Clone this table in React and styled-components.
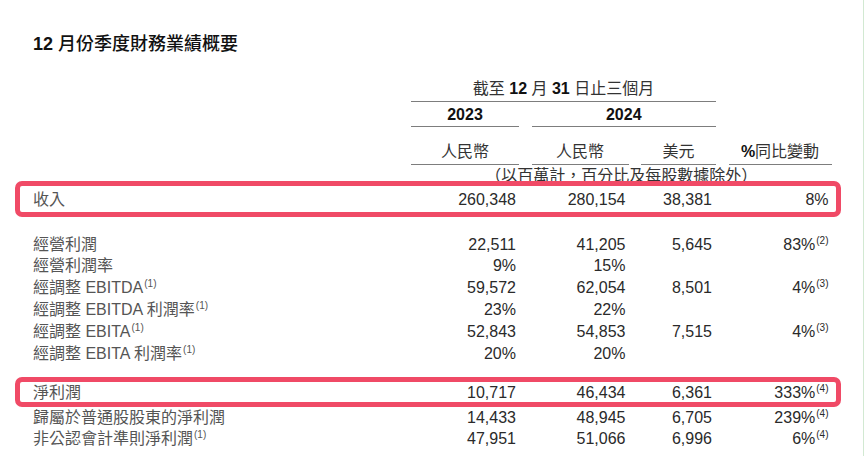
import React from "react";
import styled, { createGlobalStyle } from "styled-components";

const GlobalStyle = createGlobalStyle`
  html, body {
    margin: 0;
    padding: 0;
    background: #fff;
  }
  body {
    font-family: "Liberation Sans", "Noto Sans CJK TC", Arial, sans-serif;
    font-size: 16px;
    color: #2b2b2b;
  }
`;

const rowsTop = [
  { label: "經營利潤", c1: "22,511", c2: "41,205", c3: "5,645", c4: "83%", n: "(2)" },
  { label: "經營利潤率", c1: "9%", c2: "15%" },
  { label: "經調整 EBITDA", ls: "(1)", c1: "59,572", c2: "62,054", c3: "8,501", c4: "4%", n: "(3)" },
  { label: "經調整 EBITDA 利潤率", ls: "(1)", c1: "23%", c2: "22%" },
  { label: "經調整 EBITA", ls: "(1)", c1: "52,843", c2: "54,853", c3: "7,515", c4: "4%", n: "(3)" },
  { label: "經調整 EBITA 利潤率", ls: "(1)", c1: "20%", c2: "20%" },
];

const revenue = { label: "收入", c1: "260,348", c2: "280,154", c3: "38,381", c4: "8%" };
const netProfit = { label: "淨利潤", c1: "10,717", c2: "46,434", c3: "6,361", c4: "333%", n: "(4)" };

const rowsBottom = [
  { label: "歸屬於普通股股東的淨利潤", c1: "14,433", c2: "48,945", c3: "6,705", c4: "239%", n: "(4)" },
  { label: "非公認會計準則淨利潤", ls: "(1)", c1: "47,951", c2: "51,066", c3: "6,996", c4: "6%", n: "(4)" },
];

const DataRow = ({ row }) => (
  <Row>
    <Label>
      {row.label}
      {row.ls && <Sup>{row.ls}</Sup>}
    </Label>
    <Num>{row.c1}</Num>
    <Num>{row.c2}</Num>
    <Num $pr={4}>{row.c3}</Num>
    <Num>
      {row.c4}
      {row.n && <Sup>{row.n}</Sup>}
    </Num>
  </Row>
);

const App = () => {
  return (
    <Page>
      <GlobalStyle />
      <Title>
        <b>12</b> 月份季度財務業績概要
      </Title>

      <Section>
        <Head>
          <HeadCell $span="2 / 5" $pt={0} $pb={2}>
            截至 <b>12</b> 月 <b>31</b> 日止三個月
          </HeadCell>
        </Head>
        <Head>
          <HeadCell $span="2 / 3" $pt={3} $pb={1}>
            <b>2023</b>
          </HeadCell>
          <HeadCell $span="3 / 5" $pt={3} $pb={1}>
            <b>2024</b>
          </HeadCell>
        </Head>
        <Head>
          <HeadCell $span="2 / 3" $pt={14.5} $pb={2.5}>人民幣</HeadCell>
          <HeadCell $span="3 / 4" $pt={14.5} $pb={2.5}>人民幣</HeadCell>
          <HeadCell $span="4 / 5" $pt={14.5} $pb={2.5}>美元</HeadCell>
          <HeadCell $span="5 / 6" $pt={14.5} $pb={2.5}>
            <b>%</b>同比變動
          </HeadCell>
        </Head>
        <Head>
          <Note>（以百萬計，百分比及每股數據除外）</Note>
        </Head>
      </Section>

      <Highlight $pt={3} $pb={1} $lh={22}>
        <DataRow row={revenue} />
      </Highlight>

      <Section $mt={16.5} $lh={21.9}>
        {rowsTop.map((r) => (
          <DataRow key={r.label} row={r} />
        ))}
      </Section>

      <Highlight $mt={12} $pt={1} $pb={0} $lh={19}>
        <DataRow row={netProfit} />
      </Highlight>

      <Section $lh={21}>
        {rowsBottom.map((r) => (
          <DataRow key={r.label} row={r} />
        ))}
      </Section>
    </Page>
  );
};

export default App;

/* Styled Components */
const COLS = "365.5px 108px 97px 75px 103px";

const Page = styled.div`
  width: 864px;
  min-height: 100vh;
  box-sizing: border-box;
  padding: 32px 0 0 15px;
  border-right: 1px solid #d2e9d2;
`;

const Title = styled.h1`
  margin: 0 0 23px 18px;
  font-size: 18px;
  line-height: 24px;
  font-weight: 500;
  color: #111;
  font-family: "Liberation Sans", "Noto Sans CJK TC", sans-serif;

  b {
    font-weight: 700;
  }
`;

const Section = styled.div`
  padding-left: 18px;
  margin-top: ${(p) => p.$mt || 0}px;
  line-height: ${(p) => p.$lh || 20}px;
`;

const Head = styled.div`
  display: grid;
  grid-template-columns: ${COLS};
  column-gap: 12.5px;
  line-height: 20px;
  color: #333;
`;

const HeadCell = styled.div`
  grid-column: ${(p) => p.$span};
  text-align: center;
  padding: ${(p) => p.$pt}px 0 ${(p) => p.$pb}px;
  border-bottom: 1px solid #7d7d7d;
  white-space: nowrap;

  b {
    font-weight: 700;
    color: #111;
  }
`;

const Note = styled.div`
  grid-column: 2 / 6;
  text-align: center;
  line-height: 22px;
  margin-bottom: -6px;
  color: #333;
  white-space: nowrap;
`;

const Highlight = styled.div`
  position: relative;
  width: fit-content;
  margin-top: ${(p) => p.$mt || 0}px;
  padding: ${(p) => p.$pt}px 4px ${(p) => p.$pb}px 13px;
  border: 5px solid #f04a66;
  border-radius: 7px;
  line-height: ${(p) => p.$lh}px;
`;

const Row = styled.div`
  display: grid;
  grid-template-columns: ${COLS};
  column-gap: 12.5px;
`;

const Label = styled.div`
  color: #555;
  white-space: nowrap;
`;

const Num = styled.div`
  text-align: right;
  padding-right: ${(p) => p.$pr || 3}px;
  color: #2a2a2a;
  white-space: nowrap;
`;

const Sup = styled.sup`
  font-size: 10px;
  line-height: 0;
  vertical-align: 6px;
  margin-left: 1px;
`;
